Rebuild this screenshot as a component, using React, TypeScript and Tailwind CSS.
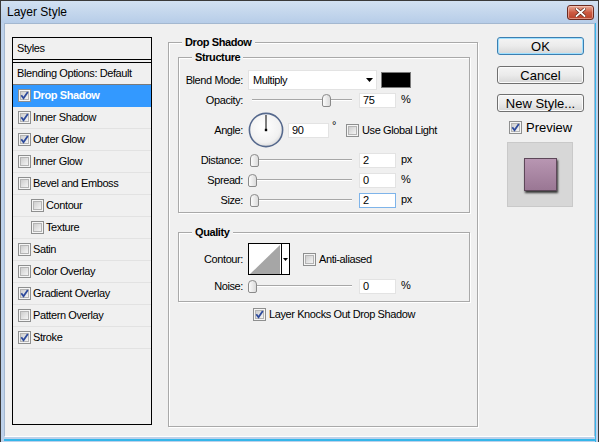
import React from "react";

const sans = "font-['Liberation_Sans',Arial,sans-serif]";

function CheckBox({ checked = false }: { checked?: boolean }) {
  return (
    <svg width="13" height="13" viewBox="0 0 13 13" className="shrink-0">
      <defs>
        <linearGradient id="cbFill" x1="0" y1="0" x2="1" y2="1">
          <stop offset="0" stopColor="#cbcbcb" />
          <stop offset="1" stopColor="#f7f7f7" />
        </linearGradient>
      </defs>
      <rect x="0.5" y="0.5" width="12" height="12" fill="#f5f5f5" stroke="#8e8f8f" />
      <rect x="2.5" y="2.5" width="8" height="8" fill="url(#cbFill)" stroke="#b4b4b4" />
      {checked && (
        <path d="M3.3 6.3 L5.5 9.3 L9.8 2.9" fill="none" stroke="#2d4a9c" strokeWidth="1.8" />
      )}
    </svg>
  );
}

type StyleItem = { label: string; checked?: boolean; selected?: boolean; indent?: boolean };

const styleItems: StyleItem[] = [
  { label: "Drop Shadow", checked: true, selected: true },
  { label: "Inner Shadow", checked: true },
  { label: "Outer Glow", checked: true },
  { label: "Inner Glow" },
  { label: "Bevel and Emboss" },
  { label: "Contour", indent: true },
  { label: "Texture", indent: true },
  { label: "Satin" },
  { label: "Color Overlay" },
  { label: "Gradient Overlay", checked: true },
  { label: "Pattern Overlay" },
  { label: "Stroke", checked: true },
];

function StylesList() {
  return (
    <div className="h-[388px] w-[140px] shrink-0 border border-black bg-[#f0f0f0] text-[11px] text-black">
      <div className="flex h-[21px] items-center pl-[4px]">Styles</div>
      <div className="h-[4px] border-y border-black" />
      <div className="flex h-[22px] items-center border-b border-[#7a7a7a] pl-[4px]">
        Blending Options: Default
      </div>
      {styleItems.map((s) => (
        <div
          key={s.label}
          className={
            s.selected
              ? "flex h-[22px] items-center border-b border-[#3399ff] bg-[#3399ff] font-bold text-white"
              : "flex h-[22px] items-center border-b border-[#e2e2e2]"
          }
        >
          <div className={s.indent ? "flex items-center gap-[2px] pl-[18px]" : "flex items-center gap-[2px] pl-[5px]"}>
            <CheckBox checked={s.checked} />
            <span>{s.label}</span>
          </div>
        </div>
      ))}
    </div>
  );
}

function GroupBox({
  title,
  className,
  children,
}: {
  title: string;
  className: string;
  children?: React.ReactNode;
}) {
  return (
    <div className={"relative border border-[#a9a9a9] shadow-[inset_1px_1px_0_#ffffff,1px_1px_0_#ffffff] " + className}>
      <span className="absolute left-[13px] top-[-7px] bg-[#f0f0f0] px-[3px] text-[11px] font-bold leading-[13px]">
        {title}
      </span>
      {children}
    </div>
  );
}

function Slider({ thumb }: { thumb: number }) {
  return (
    <div className="relative h-[15px] w-[104px] shrink-0">
      <div className="absolute left-[4px] right-0 top-[6px] h-[2px] border-t border-[#a7a7a7] border-b border-b-white" />
      <svg
        width="9"
        height="13"
        viewBox="0 0 9 13"
        className="absolute top-[1px]"
        style={{ left: thumb }}
      >
        <defs>
          <linearGradient id="thumbFill" x1="0" y1="0" x2="1" y2="0">
            <stop offset="0" stopColor="#fdfdfd" />
            <stop offset="1" stopColor="#d9d9d9" />
          </linearGradient>
        </defs>
        <path
          d="M0.5 4 Q0.5 0.5 4.5 0.5 Q8.5 0.5 8.5 4 L8.5 11 Q8.5 12.5 7 12.5 L2 12.5 Q0.5 12.5 0.5 11 Z"
          fill="url(#thumbFill)"
          stroke="#8a8a8a"
        />
      </svg>
    </div>
  );
}

function NumField({ value, width = 37, focused = false }: { value: string; width?: number; focused?: boolean }) {
  return (
    <div
      className={
        (focused ? "border-[#7eb4ea] " : "border-[#e3e3e3] ") +
        "flex h-[15px] shrink-0 items-center border bg-white pl-[3px] text-[11px] leading-none"
      }
      style={{ width }}
    >
      {value}
    </div>
  );
}

function SliderRow({
  label,
  thumb,
  value,
  unit,
  focused,
}: {
  label: string;
  thumb: number;
  value: string;
  unit: string;
  focused?: boolean;
}) {
  return (
    <div className="flex h-[20px] items-center">
      <div className="w-[64px] shrink-0 text-right">{label}</div>
      <div className="ml-[5px]">
        <Slider thumb={thumb} />
      </div>
      <div className="ml-[7px]">
        <NumField value={value} focused={focused} />
      </div>
      <span className="ml-[5px] -mt-[2px]">{unit}</span>
    </div>
  );
}

function AngleDial() {
  return (
    <svg width="36" height="36" viewBox="0 0 36 36" className="shrink-0">
      <defs>
        <radialGradient id="dialFill" cx="0.45" cy="0.4" r="0.6">
          <stop offset="0" stopColor="#ffffff" />
          <stop offset="0.8" stopColor="#f1f1f1" />
          <stop offset="1" stopColor="#dcdcdc" />
        </radialGradient>
      </defs>
      <circle cx="18" cy="18" r="16.6" fill="url(#dialFill)" stroke="#56698d" strokeWidth="1.6" />
      <line x1="18" y1="18" x2="18" y2="3" stroke="#000" strokeWidth="1" />
      <rect x="16.8" y="16.8" width="2.4" height="2.4" fill="#000" />
    </svg>
  );
}

function ContourPicker() {
  return (
    <div className="flex h-[32px] w-[42px] shrink-0 border border-black bg-white">
      <svg width="32" height="30" viewBox="0 0 32 30" className="shrink-0">
        <path d="M1 30 L31 1 L31 30 Z" fill="#a6a6a6" />
      </svg>
      <div className="flex w-[8px] items-center justify-center border-l border-black">
        <svg width="5" height="3" viewBox="0 0 5 3">
          <path d="M0 0 L5 0 L2.5 3 Z" fill="#000" />
        </svg>
      </div>
    </div>
  );
}

function DialogButton({ label, primary = false }: { label: string; primary?: boolean }) {
  return (
    <div
      className={
        (primary
          ? "border-[#3c7fb1] shadow-[inset_0_0_0_1px_#9fe0ff] "
          : "border-[#707070] shadow-[inset_0_0_0_1px_#fbfbfb] ") +
        "flex h-[18px] w-[87px] items-center justify-center rounded-[3px] border bg-gradient-to-b from-[#f4f4f4] via-[#ebebeb] to-[#d7d7d7] text-[13px] leading-none text-black"
      }
    >
      {label}
    </div>
  );
}

export default function App() {
  return (
    <div className={sans + " relative h-[442px] w-[599px] overflow-hidden bg-[#bdd1ea]"}>
      <div className="flex h-full flex-col border-x border-t border-[#3a3a3a]">
        {/* title bar */}
        <div className="flex h-[22px] shrink-0 items-center justify-between bg-gradient-to-b from-[#d2e1f2] to-[#b7cde8] pl-[6px] pr-[4px]">
          <span className="text-[12px] text-black">Layer Style</span>
          <div className="flex h-[15px] w-[27px] items-center justify-center rounded-[3px] border border-[#6b2a20] bg-gradient-to-b from-[#e7aa98] via-[#cc5a42] to-[#b8432c] shadow-[inset_0_0_0_1px_rgba(255,220,210,0.5)]">
            <svg width="11" height="9" viewBox="0 0 11 9">
              <path d="M1.5 1 L9.5 8 M9.5 1 L1.5 8" stroke="#5a2418" strokeWidth="3.2" strokeLinecap="square" />
              <path d="M1.5 1 L9.5 8 M9.5 1 L1.5 8" stroke="#ffffff" strokeWidth="1.8" strokeLinecap="square" />
            </svg>
          </div>
        </div>

        {/* window body */}
        <div className="flex min-h-0 flex-1 pl-[3px] pr-[2px]">
          <div className="flex flex-1 flex-col border-r border-r-[#35b6ea]">
            <div className="flex h-[414px] items-start border border-[#a4b8d0] border-b-white bg-[#f0f0f0] text-[11px] tracking-[-0.4px] text-black">
              {/* styles list */}
              <div className="ml-[7px] mt-[13px]">
                <StylesList />
              </div>

              {/* settings */}
              <div className="ml-[16px] mt-[18px]">
                <GroupBox title="Drop Shadow" className="h-[385px] w-[310px] pl-[9px] pt-[14px]">
                  <GroupBox title="Structure" className="w-[292px] pb-[2px] pt-[12px]">
                    <div className="flex h-[20px] items-center">
                      <div className="w-[64px] shrink-0 text-right">Blend Mode:</div>
                      <div className="ml-[5px] flex h-[20px] w-[129px] items-center justify-between border border-[#e3e3e3] bg-white pl-[4px] pr-[3px]">
                        <span>Multiply</span>
                        <svg width="7" height="4" viewBox="0 0 7 4">
                          <path d="M0 0 L7 0 L3.5 4 Z" fill="#000" />
                        </svg>
                      </div>
                      <div className="ml-[4px] h-[16px] w-[30px] border border-[#7a7a7a] bg-black" />
                    </div>
                    <SliderRow label="Opacity:" thumb={74} value="75" unit="%" />
                    <div className="flex h-[40px] items-center">
                      <div className="w-[64px] shrink-0 text-right">Angle:</div>
                      <div className="ml-[5px]">
                        <AngleDial />
                      </div>
                      <div className="ml-[4px]">
                        <NumField value="90" width={41} />
                      </div>
                      <span className="ml-[3px] -mt-[10px]">°</span>
                      <div className="ml-[10px] flex items-center gap-[3px]">
                        <CheckBox />
                        <span>Use Global Light</span>
                      </div>
                    </div>
                    <SliderRow label="Distance:" thumb={2} value="2" unit="px" />
                    <SliderRow label="Spread:" thumb={0} value="0" unit="%" />
                    <SliderRow label="Size:" thumb={2} value="2" unit="px" focused />
                  </GroupBox>

                  <GroupBox title="Quality" className="mt-[19px] w-[292px] pb-[5px] pt-[10px]">
                    <div className="flex h-[32px] items-center">
                      <div className="w-[64px] shrink-0 text-right">Contour:</div>
                      <div className="ml-[5px]">
                        <ContourPicker />
                      </div>
                      <div className="ml-[13px] flex items-center gap-[3px]">
                        <CheckBox />
                        <span>Anti-aliased</span>
                      </div>
                    </div>
                    <div className="mt-[1px]">
                      <SliderRow label="Noise:" thumb={0} value="0" unit="%" />
                    </div>
                  </GroupBox>

                  <div className="ml-[75px] mt-[2px] flex h-[20px] items-center gap-[3px]">
                    <CheckBox checked />
                    <span>Layer Knocks Out Drop Shadow</span>
                  </div>
                </GroupBox>
              </div>

              {/* buttons and preview */}
              <div className="ml-[19px] mt-[13px] flex flex-col items-start tracking-normal">
                <DialogButton label="OK" primary />
                <div className="mt-[11px]">
                  <DialogButton label="Cancel" />
                </div>
                <div className="mt-[10px]">
                  <DialogButton label="New Style..." />
                </div>
                <div className="ml-[12px] mt-[9px] flex h-[13px] items-center gap-[4px] text-[13px]">
                  <CheckBox checked />
                  <span>Preview</span>
                </div>
                <div className="ml-[10px] mt-[8px] flex h-[65px] w-[66px] items-center justify-center border border-[#c9c9c9] bg-[#d7d7d7]">
                  <div className="h-[33px] w-[33px] border border-[#5d4759] bg-gradient-to-b from-[#b896b2] to-[#9a7794] shadow-[1px_2px_2px_rgba(0,0,0,0.75)]" />
                </div>
              </div>
            </div>
            <div className="h-[2px]" />
            <div className="h-[2px] bg-[#35b6ea]" />
          </div>
        </div>
      </div>
    </div>
  );
}
